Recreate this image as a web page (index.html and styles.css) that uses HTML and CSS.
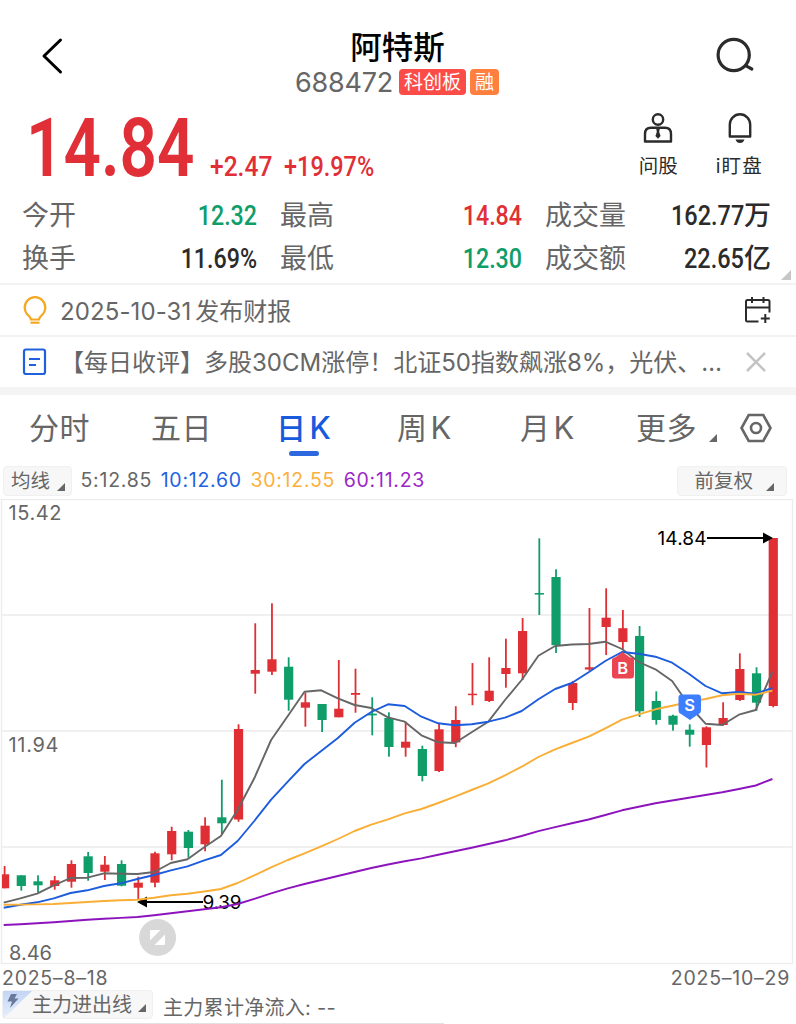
FILE: index.html
```html
<!DOCTYPE html>
<html lang="zh-CN">
  <head>
    <meta charset="UTF-8">
    <meta name="viewport" content="width=device-width, initial-scale=1.0">
    <title>阿特斯 688472</title>
    <link rel="stylesheet" href="styles.css">
  </head>
  <body>
<header class="header">
  <svg class="back" width="24" height="40" viewBox="0 0 24 40">
    <path d="M21.500 4 L5 20 L21.500 36" />
  </svg>
  <div class="title">
    <h1>阿特斯</h1>
    <div class="code-row">
      <span class="code">688472</span>
      <span class="badge red-badge">科创板</span>
      <span class="badge orange-badge">融</span>
    </div>
  </div>
  <svg class="search" width="40" height="36" viewBox="0 0 40 36">
    <circle cx="18.7" cy="18" r="15.6" />
    <path d="M31.5 29.2 L36.8 32" />
  </svg>
</header>

<section class="quote">
  <div class="price-row">
    <span class="price din up">14.84</span>
    <span class="change din up">+2.47</span>
    <span class="percent din up">+19.97%</span>
  </div>
  <div class="actions">
    <div class="action">
      <svg width="30" height="32" viewBox="0 0 30 32">
        <circle cx="15" cy="7.5" r="5.2" />
        <path d="M2 29.5 V22 Q2 15.8 8 15.8 H22 Q28 15.8 28 22 V29.5 Z" />
        <path class="solid" d="M13.3 17 H16.7 L16.2 20 L17.6 24 L15 26.8 L12.4 24 L13.8 20 Z" />
      </svg>
      <span>问股</span>
    </div>
    <div class="action">
      <svg width="30" height="32" viewBox="0 0 30 32">
        <path d="M5.8 24.5 V12.5 A10.2 10.2 0 0 1 26.2 12.5 V24.5 Z" />
        <path class="solid" d="M11.5 27.5 H20.5 Q19.3 31 16 31 Q12.7 31 11.5 27.5 Z" />
      </svg>
      <span class="watch">i盯盘</span>
    </div>
  </div>
</section>

<section class="stats">
  <span class="label">今开</span><span class="value din down">12.32</span>
  <span class="label">最高</span><span class="value din up">14.84</span>
  <span class="label">成交量</span><span class="value"><span class="din num">162.77</span>万</span>
  <span class="label">换手</span><span class="value din">11.69%</span>
  <span class="label">最低</span><span class="value din down">12.30</span>
  <span class="label">成交额</span><span class="value"><span class="din num">22.65</span>亿</span>
  <i class="corner"></i>
</section>

<div class="notice">
  <svg class="bulb" width="26" height="30" viewBox="0 0 26 30">
    <path d="M9 24.500 Q8.700 22.300 6.300 20.300 A10.300 10.300 0 1 1 19.700 20.300 Q17.300 22.300 17 24.500 Z" />
    <path d="M8.500 27.700 H17.500" />
  </svg>
  <span class="notice-text"><span class="day">2025-10-31</span>发布财报</span>
  <svg class="calendar" width="28" height="28" viewBox="0 0 28 28">
    <path d="M14.500 25.500 H3.500 Q2 25.500 2 24 V5.500 Q2 4 3.500 4 H24 Q25.500 4 25.500 5.500 V16.500 M2 11.500 H25.500 M8 1 V7 M19.500 1 V7 M21.300 18 V27 M16.800 22.500 H25.800" />
  </svg>
</div>
<div class="notice news">
  <svg class="doc" width="26" height="30" viewBox="0 0 26 30">
    <rect x="2" y="2.500" width="21" height="24.500" rx="2" />
    <path d="M7 12 H18 M7 18 H14" />
  </svg>
  <span class="notice-text">【每日收评】多股30CM涨停！北证50指数飙涨8%，光伏、…</span>
  <svg class="close" width="22" height="22" viewBox="0 0 22 22">
    <path d="M2 2 L20 20 M20 2 L2 20" />
  </svg>
</div>

<nav class="tabs">
  <span>分时</span>
  <span>五日</span>
  <span class="active">日<b>K</b></span>
  <span>周<b>K</b></span>
  <span>月<b>K</b></span>
  <span class="more">更多<i class="tri"></i></span>
  <svg width="34" height="32" viewBox="0 0 34 32">
    <path d="M9.700 3 H24.300 L31.500 16 L24.300 29 H9.700 L2.500 16 Z" />
    <circle cx="17" cy="16" r="5" />
  </svg>
</nav>

<div class="averages">
  <span class="pill">均线<i class="tri"></i></span>
  <span class="ma5">5:12.85</span>
  <span class="ma10">10:12.60</span>
  <span class="ma30">30:12.55</span>
  <span class="ma60">60:11.23</span>
  <span class="pill adjust">前复权<i class="tri"></i></span>
</div>

<svg id="chart" width="796" height="466" viewBox="0 499 796 466">
  <g class="grid">
    <rect x="1.500" y="499.500" width="791" height="464" />
    <path d="M2 615 H792 M2 731 H792 M2 847 H792" />
  </g>
  <g class="axis">
    <text x="8.500" y="520" textLength="53">15.42</text>
    <text x="8.500" y="752" textLength="50">11.94</text>
    <text x="9" y="960" textLength="43">8.46</text>
  </g>
  <g id="candles"></g>
  <g class="mark">
    <path d="M146 902 H203 M707 538 H765" />
    <path class="head" d="M137 902 L147 896.500 V907.500 Z M773 538 L763 532.500 V543.500 Z" />
    <text x="202.500" y="909" textLength="39">9.39</text>
    <text x="657.500" y="545" textLength="49">14.84</text>
  </g>
  <g id="lines"></g>
  <g class="trade">
    <path class="buy" d="M622.500 652 L630 657.500 H631 Q634 657.500 634 660.500 V675.500 Q634 678.500 631 678.500 H615 Q612 678.500 612 675.500 V660.500 Q612 657.500 615 657.500 Z" />
    <text x="622.700" y="674">B</text>
    <path class="sell" d="M681.500 694.500 H698 Q701 694.500 701 697.500 V710.500 Q701 713 698.500 714 L690 720 L681 714 Q678.500 713 678.500 710.500 V697.500 Q678.500 694.500 681.500 694.500 Z" />
    <text x="689.700" y="711">S</text>
  </g>
  <g class="expand">
    <circle cx="157.600" cy="937.500" r="18.500" />
    <path d="M151 930 H160.500 L150 940.500 V931 Q150 930 151 930 Z M165 934.500 V944 Q165 945 164 945 H154.500 Z" />
  </g>
</svg>

<div class="dates"><span>2025–8–18</span><span>2025–10–29</span></div>
<div class="flow">
  <span class="pill flow-pill">
    <svg width="29" height="28" viewBox="0 0 29 28">
      <defs>
        <linearGradient id="sky" x1="0" y1="0" x2="0" y2="1">
          <stop offset="0" stop-color="#c3d5f5" />
          <stop offset="1" stop-color="#e8f0fd" />
        </linearGradient>
      </defs>
      <path d="M0 0 H29 L0 28 Z" fill="url(#sky)" />
      <path d="M8 3 H14 L11.500 7.500 H15.500 L7 17 L9 10.500 H4.500 Z" fill="#68799c" />
    </svg>
    主力进出线<i class="tri"></i>
  </span>
  <span class="inflow">主力累计净流入: --</span>
</div>
<div class="bottom-line"></div>

<script>
const STEP = 16.71; // distance between two trading days
const FIRST = 4.6;

// high, body top, body bottom, low, direction (1 = up, 0 = down)
const candles = [
  [866, 874.3, 888.3, 888.3, 1],
  [875.3, 875.3, 886, 890.7, 0],
  [875.3, 881.3, 885.3, 892.5, 0],
  [876, 880.3, 886, 889.7, 1],
  [860.3, 864, 881.7, 887.7, 1],
  [852, 856.3, 873, 880.7, 0],
  [856, 864.7, 871.7, 880, 1],
  [860.3, 864, 885.7, 886.3, 0],
  [876.7, 882.7, 887.7, 899, 1],
  [851.7, 853.3, 882.7, 887.3, 1],
  [826.7, 831, 854.3, 860.3, 1],
  [830, 831.7, 848, 857.7, 0],
  [817.3, 825.7, 844.3, 851.3, 1],
  [779.7, 817.3, 823.3, 834, 0],
  [724.3, 729, 819.5, 821.8, 1],
  [623.3, 670, 673.7, 693.7, 1],
  [603.3, 659.3, 671.7, 675, 1],
  [657.3, 666.7, 699.7, 710.7, 0],
  [692.7, 702.3, 707.7, 726.7, 1],
  [704, 704, 720, 732, 0],
  [660, 708.7, 717.3, 717.3, 1],
  [668.7, 693, 694.8, 712.7, 1],
  [697.3, 713.6, 715.4, 735.3, 0],
  [712.3, 718, 747, 756.7, 0],
  [721.7, 741.7, 747.7, 756.7, 1],
  [745.7, 749, 776, 781.3, 0],
  [724, 729.3, 771, 772, 1],
  [706.2, 720, 742.4, 747.2, 1],
  [663, 693.7, 695.2, 705.2, 1],
  [657.3, 690.7, 701, 702, 1],
  [638.7, 668, 674, 687.7, 1],
  [618, 631, 673.3, 680, 1],
  [538.3, 593, 594.6, 615, 0],
  [569.3, 577, 645.2, 653, 0],
  [681, 683, 703, 710, 1],
  [608, 667.3, 669.5, 670.7, 1],
  [588.3, 617.7, 627, 655, 1],
  [610, 628.2, 642, 649, 1],
  [626, 636, 711.3, 717, 0],
  [691.3, 701, 720, 724.7, 0],
  [714.7, 715.7, 724.7, 730.7, 0],
  [724.3, 729.7, 734.7, 746.7, 0],
  [726.3, 727.3, 745, 767.5, 1],
  [702.3, 718, 725, 725.7, 1],
  [653.3, 669, 700, 701, 1],
  [667.3, 673.3, 702.7, 710.7, 0],
  [538, 538, 706, 707.3, 1],
];

const averages = {
  ma5: [902.7, 898.3, 893.7, 885.3, 878, 877.7, 873.3, 873.7, 874, 872, 863, 859.3, 847.3, 836, 810, 778.3,
    740, 716, 691.7, 690.3, 698.3, 705, 708, 717.3, 721.7, 735.3, 742.3, 743, 732.3, 721.7, 700, 680,
    655.7, 646, 644.5, 644, 641.7, 649, 662, 669.3, 681, 705, 723.7, 725, 714.7, 710, 671.7],
  ma10: [907.7, 904.7, 902.3, 898.3, 893, 890.3, 886, 883.3, 879, 875, 870.3, 866.3, 860.3, 855, 841, 821,
    799.7, 781.7, 764, 751, 738, 722.7, 712, 704.3, 706, 716.7, 723.3, 725.3, 724.3, 721.7, 717.7, 711,
    699.3, 689, 683, 672.3, 661, 652, 653.7, 656.7, 662.7, 673.7, 686, 693.3, 692, 693.7, 688],
  ma30: [904.7, 904.6, 904.4, 904, 903, 902, 901, 900.3, 899.7, 897.7, 895.3, 893.7, 891.5, 889, 883, 875.3,
    867.3, 860, 853.3, 846.3, 839, 831, 824.7, 819.3, 813.3, 809, 803, 796.7, 790, 783.3, 775.3, 766.7,
    757, 749.3, 743, 736.7, 728.3, 719.7, 714.3, 709.3, 705.7, 702, 699, 695.3, 693.7, 694.7, 690.7],
  ma60: [925, 924.2, 923.3, 922.2, 921, 919.8, 918.7, 917.9, 917, 915.3, 913.3, 911.3, 909.3, 907.3, 904, 898.8,
    893.3, 888.3, 884, 880, 876, 872, 868, 864.5, 861.3, 858.4, 854.8, 851.3, 847.8, 844, 840.3, 836,
    831.2, 827.2, 823.3, 819.5, 815, 810.3, 806.8, 803.3, 800.5, 797.7, 795, 792.3, 789, 785.5, 779],
};

let bars = "";
candles.forEach(([high, top, bottom, low, up], i) => {
  const x = FIRST + i * STEP;
  const left = Math.max(2, x - 4.6);
  bars += `<g class="${up ? "rise" : "fall"}">
    <rect x="${x - 0.9}" y="${high}" width="1.8" height="${low - high}" />
    <rect x="${left}" y="${top}" width="${x + 4.6 - left}" height="${bottom - top}" />
  </g>`;
});
document.getElementById("candles").innerHTML = bars;

let lines = "";
for (const name in averages) {
  const points = averages[name].map((y, i) => `${(3.7 + i * STEP).toFixed(1)},${y}`);
  lines += `<polyline class="${name}" points="${points.join(" ")}" />`;
}
document.getElementById("lines").innerHTML = lines;
</script>
  </body>
</html>
```
FILE: styles.css
```css
* {
  box-sizing: border-box;
}

body {
  width: 796px;
  height: 1024px;
  margin: 0;
  overflow: hidden;
  background: #fff;
  color: #666;
  font-family: Inter, "Noto Sans CJK SC", sans-serif;
}

svg {
  display: block;
  flex: none;
  fill: none;
}

.up {
  color: #e02f36;
}
.down {
  color: #0f9d6a;
}
.din {
  font-family: Roboto, "Noto Sans CJK SC", sans-serif;
  font-weight: 500;
}

/* header */
.header {
  height: 104px;
  display: flex;
  justify-content: space-between;
  align-items: flex-start;
  padding: 0 41px 0 39px;
}
.back {
  margin-top: 36px;
  stroke: #000;
  stroke-width: 3;
  stroke-linecap: round;
  stroke-linejoin: round;
}
.search {
  margin-top: 37px;
  stroke: #2b2b2b;
  stroke-width: 3.2;
  stroke-linecap: round;
}
.title {
  padding: 28px 0 0 20px;
}
h1 {
  margin: 0 3px 0 0;
  color: #000;
  font-size: 31.5px;
  font-weight: 500;
  line-height: 40px;
  text-align: center;
}
.code-row {
  display: flex;
  align-items: center;
  height: 28px;
}
.code {
  width: 104px;
  font-size: 27px;
  font-weight: 400;
  letter-spacing: -0.2px;
}
.badge {
  height: 26px;
  margin-right: 4px;
  padding: 0 5px;
  border-radius: 4px;
  color: #fff;
  font-size: 19px;
  line-height: 27px;
}
.red-badge {
  background: #fb4c47;
}
.orange-badge {
  background: #ff7f3f;
}

/* price */
.quote {
  height: 90px;
  display: flex;
  justify-content: space-between;
  padding: 0 33px 0 26px;
}
.price-row {
  display: flex;
  align-items: baseline;
  line-height: 90px;
}
.price-row .din {
  transform-origin: left;
}
.price {
  width: 184px;
  font-size: 81px;
  font-weight: 600;
  transform: scaleX(0.81);
}
.change {
  width: 74px;
  font-size: 27px;
  transform: scaleX(0.91);
}
.percent {
  font-size: 27px;
  transform: scaleX(0.87);
}
.actions {
  display: flex;
  gap: 38px;
  padding-top: 8px;
  color: #2b2b2b;
  font-size: 19.5px;
}
.action {
  display: flex;
  flex-direction: column;
  align-items: center;
  line-height: 44px;
}
.action svg {
  stroke: #2b2b2b;
  stroke-width: 2.4;
  stroke-linejoin: round;
}
.action .solid {
  fill: #2b2b2b;
  stroke: none;
}
.watch {
  letter-spacing: 1.2px;
}

.stats {
  position: relative;
  height: 91px;
  display: grid;
  grid-template-columns: 94px 141px 117px 148px 122px 127px;
  grid-template-rows: 43px 43px;
  padding-left: 22px;
  border-bottom: 2px solid #f2f2f2;
  font-size: 27px;
  line-height: 44px;
}
.label {
  white-space: nowrap;
}
.value + .label {
  padding-left: 23px;
}
/* first label of the second row */
.label:nth-of-type(7) {
  padding-left: 0;
}
.value {
  color: #2b2b2b;
  text-align: right;
  white-space: nowrap;
  font-weight: 500;
}
.value.up {
  color: #e02f36;
}
.value.down {
  color: #0f9d6a;
}
.value.din {
  transform: scaleX(0.86);
  transform-origin: right;
}
.num {
  display: inline-block;
  transform: scaleX(0.87);
  transform-origin: right;
}
.corner {
  position: absolute;
  right: 5px;
  bottom: 3px;
  border-left: 10px solid transparent;
  border-bottom: 10px solid #c6c6c6;
}

/* notices */
.notice {
  height: 52px;
  display: flex;
  align-items: center;
  padding: 0 24px 0 22px;
  border-bottom: 2px solid #f2f2f2;
  font-size: 24px;
}
.notice-text {
  flex: 1;
  margin: -2px 0 0 12px;
  white-space: nowrap;
}
.day {
  margin-right: 4px;
  letter-spacing: 0.1px;
}
.bulb {
  stroke: #f5a821;
  stroke-width: 2.2;
}
.doc {
  stroke: #2160dc;
  stroke-width: 2.2;
}
.calendar {
  stroke: #2b2b2b;
  stroke-width: 2;
}
.news {
  height: 58px;
  border-bottom: 8px solid #f4f4f4;
  padding-right: 29px;
}
.news .notice-text {
  margin-top: -3px;
  font-weight: 400;
}
.close {
  stroke: #c4c4c4;
  stroke-width: 2.6;
}

/* period tabs */
.tabs {
  height: 70px;
  display: grid;
  grid-template-columns: 122px 125px 121px 123px 116px 103px 34px;
  align-items: center;
  padding: 0 0 2px 29px;
  font-size: 30px;
  letter-spacing: 0.6px;
}
.tabs span {
  position: relative;
  top: -3px;
  white-space: nowrap;
}
.tabs b {
  margin-left: 3px;
  font-size: 31px;
  font-weight: inherit;
}
.tabs .active {
  color: #175add;
  font-weight: 500;
}
.tabs .active::after {
  content: "";
  position: absolute;
  left: 13px;
  bottom: -8px;
  width: 30px;
  height: 5px;
  border-radius: 3px;
  background: #2d68df;
}
.tabs svg {
  position: relative;
  top: -1px;
  stroke: #666;
  stroke-width: 2.6;
}
.tri {
  display: inline-block;
  width: 0;
  height: 0;
  border-left: 8px solid transparent;
  border-bottom: 8px solid #666;
}
.more .tri {
  margin-left: 12px;
  position: relative;
  top: 3px;
}

.averages {
  height: 34px;
  display: flex;
  align-items: flex-start;
  gap: 8.5px;
  padding: 1px 9px 0 3px;
  font-size: 19.5px;
  line-height: 28px;
}
.averages > span:not(.pill) {
  letter-spacing: 0.75px;
}
.pill {
  height: 30px;
  padding: 0 6px 0 7px;
  border: 1px solid #f0f0f0;
  border-radius: 4px;
  background: #f7f7f7;
  white-space: nowrap;
}
.pill .tri {
  position: relative;
  top: 3px;
  margin-left: 7px;
}
.adjust {
  margin-left: auto;
  padding: 0 12px 0 16px;
}
.adjust .tri {
  margin-left: 13px;
}
.ma5 {
  stroke: #666;
}
.ma10 {
  color: #2262df;
  stroke: #1c5cdd;
}
.ma30 {
  color: #fbb03b;
  stroke: #f9ae35;
}
.ma60 {
  color: #9c27c8;
  stroke: #8d14bd;
}
.averages span {
  stroke: none;
}

/* chart */
.grid {
  stroke: #ececec;
  stroke-width: 1.3;
}
.axis {
  fill: #666;
  font-size: 20px;
}
.rise {
  fill: #df2f35;
}
.fall {
  fill: #0f9d6a;
}
polyline {
  stroke-width: 1.9;
  stroke-linejoin: round;
}
.mark {
  fill: #000;
  stroke: #000;
  stroke-width: 2;
  font-size: 19px;
}
.mark text,
.mark .head {
  stroke: none;
}
.trade {
  font-size: 16.5px;
  font-weight: 600;
  text-anchor: middle;
}
.trade text {
  fill: #fff;
}
.buy {
  fill: #ea4550;
}
.sell {
  fill: #3d7eff;
}
.expand circle {
  fill: #d8d8d8;
}
.expand path {
  fill: #fff;
}

.dates {
  height: 25px;
  display: flex;
  justify-content: space-between;
  padding: 0 6px 0 2px;
  font-size: 19.5px;
  letter-spacing: 0.75px;
  line-height: 27px;
}
.flow {
  height: 33px;
  display: flex;
  gap: 10px;
  padding-left: 2px;
  font-size: 20px;
  line-height: 27px;
}
.flow-pill {
  display: flex;
  align-items: center;
  height: 29px;
  padding: 0 6px 0 0;
  font-size: 20px;
  line-height: 30px;
}
.flow-pill .tri {
  top: 0;
  margin: 6px 0 0 6px;
}
.inflow {
  padding-top: 5px;
  letter-spacing: 0.3px;
}
.bottom-line {
  width: 444px;
  height: 1px;
  background: #e2e2e2;
}
```
